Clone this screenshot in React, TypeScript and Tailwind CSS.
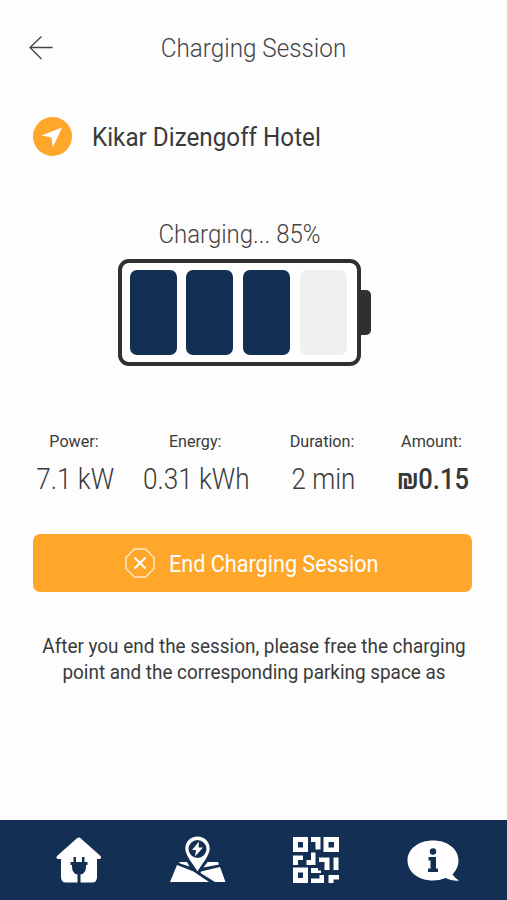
import React from "react";

const stats = [
  { label: "Power:", value: "7.1 kW", col: "w-[97px]", labelStyle: "-translate-x-[1px]", style: "font-light scale-x-[0.87] translate-x-[0.5px] text-[#3a3a3a]" },
  { label: "Energy:", value: "0.31 kWh", col: "w-[146px]", labelStyle: "-translate-x-[0.5px]", style: "font-light scale-x-[0.87] text-[#3a3a3a]" },
  { label: "Duration:", value: "2 min", col: "w-[107px]", labelStyle: "", style: "font-light scale-x-[0.865] translate-x-[0.5px] text-[#3a3a3a]" },
  { label: "Amount:", value: "₪0.15", col: "w-[113px]", labelStyle: "-translate-x-[0.5px]", style: "font-medium scale-x-[0.85] translate-x-[1px] text-[#383838]" },
];

function HomeIcon() {
  return (
    <svg width="46" height="46" viewBox="0 0 46 46" fill="#fff">
      <path d="M21 1.2Q22.800 0 24.600 1.200L44.500 19Q46 21.500 43.500 22H41V40Q41 45.500 36 45.500H24.500V37.500Q30 36.500 30 29.500V28H31.500V25H28.500V20H26V25H20V20H17.500V25H14.500V28H16V29.500Q16 36.500 21.500 37.500V45.500H10Q5 45.500 5 40V22H2Q-0.500 21.500 1 19Z" />
    </svg>
  );
}

function MapIcon() {
  return (
    <svg width="57" height="48" viewBox="0 0 57 48" fill="#fff">
      <path d="M10 26H18L20.500 30.500L11 27.500ZM8 29L24.500 35.500L40 46H1ZM38.500 26H49L50 28.500L34.500 31.500ZM32 35.500L51 31L56.500 46H46L31.500 37Z" />
      <path fillRule="evenodd" stroke="#132f54" strokeWidth="2.500" paintOrder="stroke" d="M28.500 0.500C21.500 0.500 16.300 5.700 16.300 12.500C16.300 20 25 29 28.500 35.500C32 29 40.700 20 40.700 12.500C40.700 5.700 35.500 0.500 28.500 0.500ZM28.500 4A9 9 0 1 1 28.500 22A9 9 0 1 1 28.500 4Z" />
      <path d="M30 5.500L23 14H27L26 20.500L34 11.500H29.500Z" />
    </svg>
  );
}

function QrIcon() {
  return (
    <svg width="46" height="46" viewBox="0 0 46 46" fill="#fff">
      <path fillRule="evenodd" d="M0 0H15V15H0ZM5 5V10.500H10V5ZM30.500 0H46V15H30.500ZM35.500 5V10.500H41V5ZM0 30.500H15V46H0ZM5 35.500V41H10V35.500Z" />
      <path d="M18 0H27.500V12.500H22.500V5H18ZM0 18.500H10V23H5V28H0ZM18 15.500H22.500V28H13.500V23H18ZM26 20.500H36.500V33H31.500V25H26ZM40.500 20.500H45.500V33H40.500ZM18 31H25V33.500H28V36H18ZM26.500 38H31V46H18V41.500H26.500ZM35.500 38H46V42.500H40.500V46H35.500Z" />
    </svg>
  );
}

function InfoIcon() {
  return (
    <svg width="53" height="43" viewBox="0 0 53 43">
      <path fill="#fff" d="M26 0.500C40.500 0.500 51.500 9 51.500 20.500C51.500 26 49 31 45.500 34.500Q47.500 37.500 52 40.500Q45.500 41.500 38.500 38Q32.500 40.500 26 40.500C11.500 40.500 0.500 32 0.500 20.500C0.500 9 11.500 0.500 26 0.500Z" />
      <g fill="#132f54">
        <circle cx="26" cy="11.500" r="3.200" />
        <path d="M21.500 17H29V28.500H31V32H21V28.500H23.500V20.500H21.500Z" />
      </g>
    </svg>
  );
}

export default function App() {
  return (
    <div className="flex h-[900px] w-[507px] flex-col overflow-hidden bg-[#fdfdfd] font-['Roboto',sans-serif] text-[#3a3a3a]">
      <header className="flex h-24 items-center pl-[29px]">
        <svg width="24" height="24" viewBox="0 0 24 24" fill="none" stroke="#444" strokeWidth="1.3">
          <path d="M12.500 0.500L1 11.500L12.500 23M1 11.500H23.500" />
        </svg>
        <h1 className="ml-[101px] w-[199px] scale-x-[0.97] text-center text-[25px] font-light leading-none whitespace-nowrap text-[#444]">Charging Session</h1>
      </header>

      <section className="flex h-20 items-center pl-[33px]">
        <svg width="39" height="39" viewBox="0 0 39 39">
          <circle cx="19.500" cy="19.500" r="19.500" fill="#ffa72a" />
          <path d="M29 10.500L19.800 30.500L18.500 20.500L8.500 18.500Z" fill="#fff" />
        </svg>
        <h2 className="ml-[19.500px] mt-[2px] origin-left scale-x-[0.97] text-[25px] leading-none whitespace-nowrap">Kikar Dizengoff Hotel</h2>
      </section>

      <section className="flex flex-col items-center pt-[46px]">
        <p className="mr-7 h-[37px] scale-x-[0.96] text-[25px] font-light leading-[26px] whitespace-nowrap text-[#444]">Charging... 85%</p>
        <div className="mr-[18px] flex items-center">
          <div className="flex h-[107px] w-[243px] gap-[9.700px] rounded-[11px] border-4 border-[#303030] bg-white pt-[7px] pl-[7.500px]">
            <div className="h-[85px] w-[47px] rounded-[7px] bg-[#132f54]" />
            <div className="h-[85px] w-[47px] rounded-[7px] bg-[#132f54]" />
            <div className="h-[85px] w-[47px] rounded-[7px] bg-[#132f54]" />
            <div className="h-[85px] w-[47px] rounded-[7px] bg-[#f0f0f0]" />
          </div>
          <div className="h-[45px] w-[10px] rounded-r-[5px] bg-[#303030]" />
        </div>
      </section>

      <section className="mt-[63px] flex h-[105px] pl-[26px]">
        {stats.map((s) => (
          <div key={s.label} className={`flex flex-col items-center ${s.col}`}>
            <span className={`scale-x-[0.95] text-[17px] leading-6 whitespace-nowrap ${s.labelStyle}`}>{s.label}</span>
            <span className={`mt-[8px] text-[30px] leading-9 whitespace-nowrap ${s.style}`}>{s.value}</span>
          </div>
        ))}
      </section>

      <button className="ml-[33px] flex h-[58px] w-[439px] shrink-0 items-center rounded-[7px] bg-[#ffa72a] pl-[92px] text-white">
        <svg width="30" height="30" viewBox="0 0 30 30" fill="none" stroke="#fff">
          <path strokeOpacity=".75" strokeWidth="1.400" d="M9.500 1H20.500L29 9.500V20.500L20.500 29H9.500L1 20.500V9.500Z" />
          <path strokeWidth="2" d="M9.500 9.500L20.500 20.500M20.500 9.500L9.500 20.500" />
        </svg>
        <span className="mt-[2px] ml-[14px] origin-left scale-x-[0.9] text-[24px] leading-none whitespace-nowrap">End Charging Session</span>
      </button>

      <div className="mt-[41px] ml-[1px] flex scale-x-[0.945] flex-col items-center text-center text-[20px] leading-[26px] whitespace-nowrap">
        <span>After you end the session, please free the charging</span>
        <span>point and the corresponding parking space as</span>
      </div>

      <nav className="mt-auto flex h-20 shrink-0 items-start bg-[#132f54] pt-[17px]">
        <div className="ml-[56px]"><HomeIcon /></div>
        <div className="ml-[67px] -mt-[1px]"><MapIcon /></div>
        <div className="ml-[67px]"><QrIcon /></div>
        <div className="ml-[68px] mt-[3px]"><InfoIcon /></div>
      </nav>
    </div>
  );
}
